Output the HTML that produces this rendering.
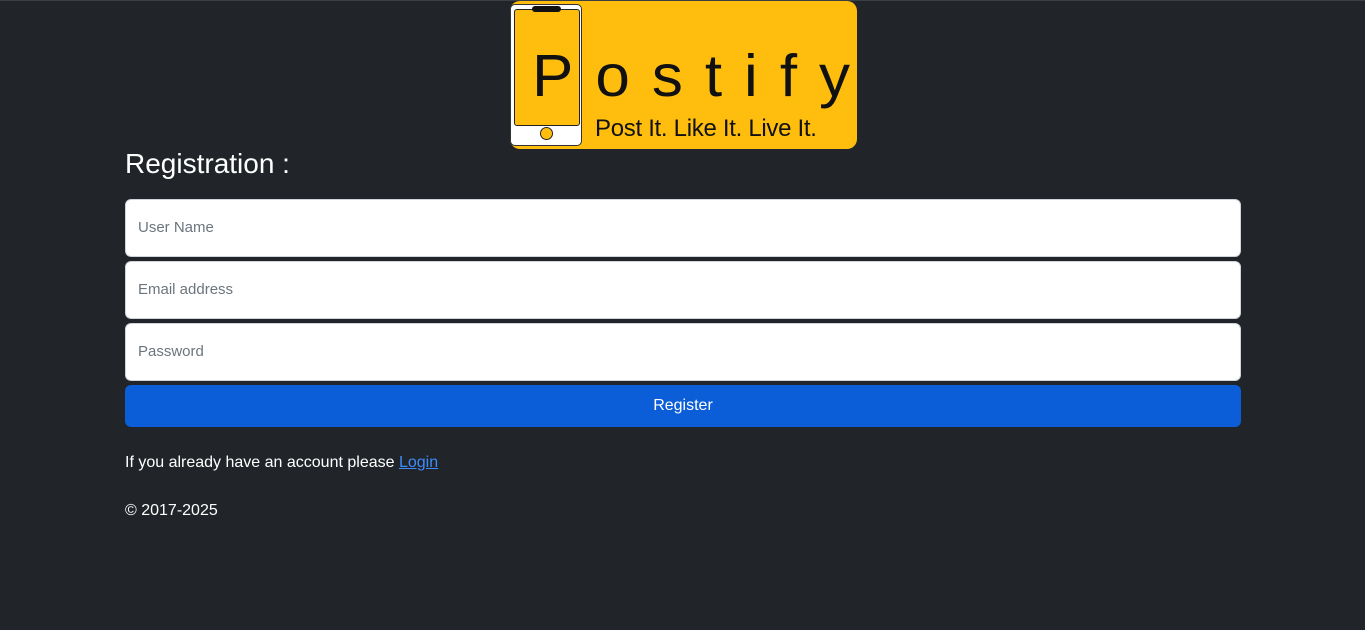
<!DOCTYPE html>
<html><head><meta charset="utf-8"><style>
body{margin:0;background:#212529;width:1365px;height:630px;overflow:hidden;font-family:"Liberation Sans",sans-serif;color:#fff;border-top:1px solid #3a3f44;box-sizing:border-box}
.logo{position:absolute;left:510px;top:1px;width:347px;height:148px;background:#ffbe0e;border-radius:10px;overflow:hidden}
.ph{position:absolute;left:0;top:3px;width:72px;height:142px;background:#fff;border:1px solid #333;border-radius:5px;box-sizing:border-box}
.scr{position:absolute;left:3px;top:4px;width:64px;height:115px;background:#ffbe0e;border:1px solid #222;border-radius:3px}
.notch{position:absolute;left:21px;top:1px;width:29px;height:6px;background:#111;border-radius:3px}
.btnc{position:absolute;left:29px;top:122px;width:11px;height:11px;border:1px solid #222;border-radius:50%;background:#ffbe0e}
.big{position:absolute;left:22px;top:40px;font-size:62px;letter-spacing:22px;color:#111;font-weight:300;transform:scaleY(0.95)}
.tag{position:absolute;left:85px;top:114px;font-size:24px;color:#111;letter-spacing:-0.3px}
h2{position:absolute;left:125px;top:148px;margin:0;font-size:28px;font-weight:400}
.in{position:absolute;left:125px;width:1116px;height:58px;background:#fff;border:1px solid #ced4da;border-radius:6px;box-sizing:border-box;color:#6c757d;font-size:15px;line-height:56px;padding-left:12px}
.btn{position:absolute;left:125px;top:385px;width:1116px;height:42px;background:#0b5ed7;border-radius:6px;text-align:center;line-height:42px;font-size:16px}
.t{position:absolute;left:125px;font-size:16px}
a{color:#3d8bfd}
</style></head><body>
<div class="logo"><div class="ph"><div class="scr"></div><div class="notch"></div><div class="btnc"></div></div>
<div class="big">Postify</div><div class="tag">Post It. Like It. Live It.</div></div>
<h2>Registration :</h2>
<div class="in" style="top:199px">User Name</div>
<div class="in" style="top:261px">Email address</div>
<div class="in" style="top:323px">Password</div>
<div class="btn">Register</div>
<div class="t" style="top:454px">If you already have an account please <a href="#">Login</a></div>
<div class="t" style="top:502px">© 2017-2025</div>
</body></html>
